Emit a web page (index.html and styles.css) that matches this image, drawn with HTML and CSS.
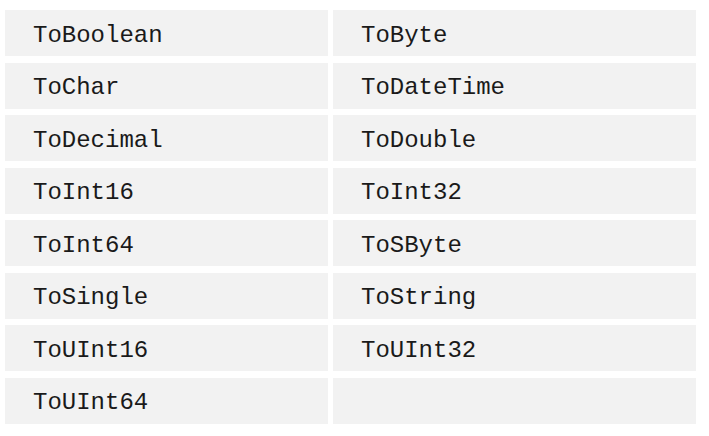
FILE: index.html
```html
<!DOCTYPE html>
<html>
<head>
<meta charset="utf-8">
<link rel="stylesheet" href="styles.css">
</head>
<body>
<div class="grid">
  <div class="cell">ToBoolean</div>
  <div class="cell">ToByte</div>
  <div class="cell">ToChar</div>
  <div class="cell">ToDateTime</div>
  <div class="cell">ToDecimal</div>
  <div class="cell">ToDouble</div>
  <div class="cell">ToInt16</div>
  <div class="cell">ToInt32</div>
  <div class="cell">ToInt64</div>
  <div class="cell">ToSByte</div>
  <div class="cell">ToSingle</div>
  <div class="cell">ToString</div>
  <div class="cell">ToUInt16</div>
  <div class="cell">ToUInt32</div>
  <div class="cell">ToUInt64</div>
  <div class="cell"></div>
</div>
</body>
</html>
```
FILE: styles.css
```css
html, body {
  margin: 0;
  padding: 0;
  background: #ffffff;
}
.grid {
  display: grid;
  grid-template-columns: 323px 363px;
  grid-auto-rows: 46px;
  column-gap: 5px;
  row-gap: 6.5px;
  padding: 10px 0 0 5px;
}
.cell {
  background: #f2f2f2;
  font-family: "Liberation Mono", "Courier New", monospace;
  font-size: 24px;
  color: #1a1a1a;
  display: flex;
  align-items: center;
  padding-left: 28px;
  padding-top: 4px;
  box-sizing: border-box;
}
```
